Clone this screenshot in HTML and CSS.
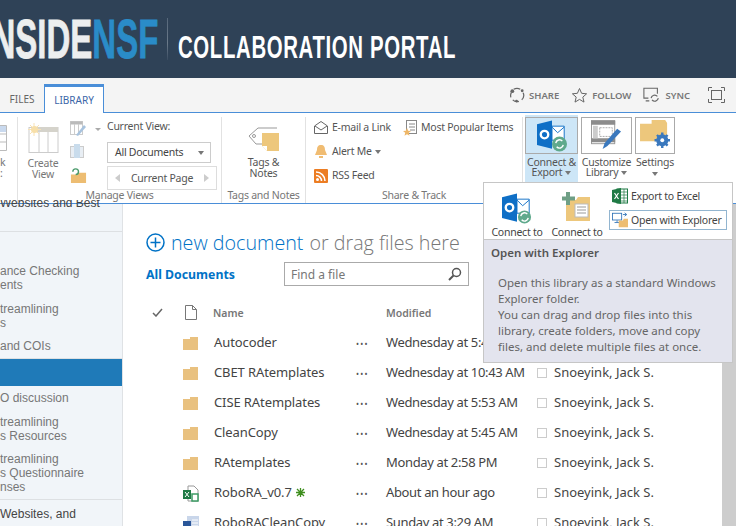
FILE: index.html
```html
<!DOCTYPE html>
<html lang="en">
<head>
    <meta charset="UTF-8">
    <title>Inside NSF Collaboration Portal</title>
    <link rel="stylesheet" href="styles.css">
</head>
<body>
    <header class="banner">
        <div class="logo"><div class="logo-mark"><span class="logo-inside">INSIDE</span><span class="logo-nsf">NSF</span></div></div>
        <div class="banner-rule"></div>
        <div class="portal-title">COLLABORATION PORTAL</div>
    </header>

    <div class="tabbar">
        <div class="tab">FILES</div>
        <div class="tab tab-active">LIBRARY</div>
        <div class="actions">
            <span class="action">
                <svg width="16" height="16" viewBox="0 0 17 17"><path d="M5 2.5a6.5 6.5 0 0 1 7 0M15 6a6.5 6.5 0 0 1-1.500 7.5M10.5 15.2a6.5 6.5 0 0 1-6.500-1.500M2 11A6.5 6.5 0 0 1 2.5 6" fill="none" stroke="#666" stroke-width="1.3"/><circle cx="3.5" cy="4.5" r="2" fill="#666"/><circle cx="14" cy="4" r="1.5" fill="#666"/><circle cx="8" cy="15" r="1.5" fill="#666"/></svg>
                SHARE
            </span>
            <span class="action">
                <svg width="17" height="17" viewBox="0 0 17 17"><path d="M8.5 1.5l2.1 4.800 5 .5-3.800 3.300 1.200 5-4.500-2.700-4.500 2.700 1.200-5L1.400 6.800l5-.5z" fill="none" stroke="#666"/></svg>
                FOLLOW
            </span>
            <span class="action">
                <svg width="18" height="16" viewBox="0 0 20 17"><path d="M6 12H1V1h15v6M3 15h4" fill="none" stroke="#666" stroke-width="1.2"/><path d="M9 12a4 4 0 0 1 7-2M17 12a4 4 0 0 1-7 2" fill="none" stroke="#666" stroke-width="1.3"/></svg>
                SYNC
            </span>
            <svg class="focus" width="17" height="16" viewBox="0 0 17 16"><path d="M.5 4V.5H4M13 .5h3.5V4M16.5 12v3.5H13M4 15.5H.5V12" fill="none" stroke="#666"/><rect x="3.5" y="3.5" width="10" height="9" fill="none" stroke="#666"/></svg>
        </div>
    </div>

    <div class="ribbon">
        <section class="group group-cut">
            <div class="group-body">
                <div class="cut-tool">
                    <svg width="8" height="26" viewBox="0 0 8 26"><path d="M0 .5h7.5v25H0M0 9h7.5M0 17h7.5" fill="none" stroke="#bbb"/><rect y="1" width="7" height="6" fill="#c9d9ee"/></svg>
                    <span>k<br>:</span>
                </div>
            </div>
        </section>

        <section class="group group-views">
            <div class="group-body views-body">
                <div class="create-view">
                    <svg width="31" height="30" viewBox="0 0 31 30"><rect x="1" y="4.5" width="29" height="25" fill="#fff" stroke="#ccc"/><rect x="9" y="4" width="21" height="5" fill="#d5d3cb"/><path d="M11 9v20M20 9v20" stroke="#ccc"/><path d="M6 0v13M0 6.500h13M2 2l9 9M11 2l-9 9" stroke="#f8e2b4"/><circle cx="6.5" cy="6.5" r="3.5" fill="#f7dfa9"/></svg>
                    <span>Create<br>View</span>
                </div>
                <div class="mini-tools">
                    <svg width="16" height="15" viewBox="0 0 16 15"><rect x=".5" y=".5" width="12" height="13" fill="#fff" stroke="#ccc"/><path d="M.5 2h12" stroke="#bbb" stroke-width="3"/><path d="M4.5 3v10M8.5 3v10" stroke="#ccc"/><path d="M6 14l8-10 2 2-8 9z" fill="#a8c3de"/></svg>
                    <svg width="15" height="15" viewBox="0 0 15 15"><rect x=".5" y="2.5" width="13" height="11" fill="#e8eef4" stroke="#ccc"/><rect x="4" y="0" width="6" height="14" fill="#c9dcec"/></svg>
                    <svg width="17" height="17" viewBox="0 0 18 18"><path d="M1 8h6l1-2h9v11H1z" fill="#edbd72"/><path d="M3 5a3 3 0 1 1 3 3" fill="none" stroke="#4a9a6b" stroke-width="1.5"/></svg>
                </div>
                <span class="mini-arrow"></span>
                <div class="view-picker">
                    <div class="view-label">Current View:</div>
                    <div class="view-select">All Documents<span class="arrow"></span></div>
                    <div class="view-pager"><span class="pager-left"></span>Current Page<span class="pager-right"></span></div>
                </div>
            </div>
            <div class="group-name">Manage Views</div>
        </section>

        <section class="group group-tags">
            <div class="group-body tags-body">
                <svg width="32" height="24" viewBox="0 0 32 24"><path d="M29 1H10L1 9l7 8h7" fill="none" stroke="#999"/><circle cx="6" cy="9" r="1.5" fill="none" stroke="#999"/><path d="M14 6h17v18H19l-5-5z" fill="#edc77c"/><path d="M14 19h5v5z" fill="#fff"/></svg>
                <span>Tags &amp;<br>Notes</span>
            </div>
            <div class="group-name">Tags and Notes</div>
        </section>

        <section class="group group-share">
            <div class="group-body share-body">
                <div class="share-col">
                    <div class="share-item">
                        <svg width="14" height="13" viewBox="0 0 14 13"><path d="M.5 5L7 .5 13.5 5v7.500H.5z" fill="#fff" stroke="#666"/><path d="M1 5l6 4 6-4" fill="none" stroke="#666"/></svg>
                        E-mail a Link
                    </div>
                    <div class="share-item">
                        <svg width="14" height="15" viewBox="0 0 14 15"><path d="M7 1c3 0 4 2 4 5l2 5H1l2-5c0-3 1-5 4-5z" fill="#f0bc72"/><rect x="5" y="12" width="4" height="2" fill="#f0bc72"/></svg>
                        <span>Alert Me<i class="arrow arrow-small"></i></span>
                    </div>
                    <div class="share-item">
                        <svg width="14" height="14" viewBox="0 0 14 14"><rect width="14" height="14" rx="1" fill="#ec7d23"/><circle cx="3.5" cy="10.5" r="1.5" fill="#fff"/><path d="M2 6.500a5.500 5.500 0 0 1 5.500 5.500M2 3a9 9 0 0 1 9 9" fill="none" stroke="#fff" stroke-width="1.5"/></svg>
                        RSS Feed
                    </div>
                </div>
                <div class="share-item">
                    <svg width="14" height="16" viewBox="0 0 14 16"><rect x="3.5" y=".5" width="10" height="13" fill="#fff" stroke="#888"/><path d="M6 4h6M6 7h6M7 10h5" stroke="#888"/><path d="M4 8l1.200 2.800L8 11l-2.200 1.800.7 3L4 14.200 1.500 15.800l.7-3L0 11l2.800-.2z" fill="#eeb768"/></svg>
                    Most Popular Items
                </div>
            </div>
            <div class="group-name">Share &amp; Track</div>
        </section>

        <section class="group group-connect">
            <div class="connect-tools">
                <div class="big-button is-open">
                    <div class="button-icon">
                        <svg width="30" height="32" viewBox="0 0 32 33"><path d="M0 4L16 0v30L0 26z" fill="#0f6fc6"/><path d="M16 6h13v15H16z" fill="#fff" stroke="#0f6fc6"/><path d="M16 7l6 6 7-6" fill="none" stroke="#0f6fc6"/><circle cx="8" cy="15" r="4" fill="none" stroke="#fff" stroke-width="2.5"/><circle cx="24" cy="25" r="8" fill="#5fa98c"/><path d="M20 24a4 4 0 0 1 7-2M28 26a4 4 0 0 1-7 2" fill="none" stroke="#fff" stroke-width="1.5"/></svg>
                    </div>
                    <span>Connect &amp;<br>Export<i class="arrow arrow-small"></i></span>
                </div>
                <div class="big-button">
                    <div class="button-icon">
                        <svg width="31" height="29" viewBox="0 0 32 30"><rect x=".5" y=".5" width="24" height="24" fill="#fff" stroke="#999"/><path d="M0 3h25M0 21h25" stroke="#8c8c8c" stroke-width="4"/><rect x="2" y="6" width="5" height="13" fill="#ccc"/><rect x="9" y="8" width="13" height="9" fill="none" stroke="#aaa" stroke-dasharray="2 1"/><path d="M12 30l2-6L27 9l4 3-14 15z" fill="#3a78bd"/></svg>
                    </div>
                    <span>Customize<br>Library<i class="arrow arrow-small"></i></span>
                </div>
                <div class="big-button">
                    <div class="button-icon">
                        <svg width="31" height="29" viewBox="0 0 32 30"><path d="M0 4h12V0h14l2 3v19H0z" fill="#edc77c"/><circle cx="23" cy="21" r="4.500" fill="none" stroke="#3a78bd" stroke-width="3.5"/><path d="M23 13v16M15 21h16M17.500 15.500l11 11M28.500 15.500l-11 11" stroke="#3a78bd" stroke-width="2.5"/><circle cx="23" cy="21" r="2" fill="#fff"/></svg>
                    </div>
                    <span>Settings<br><i class="arrow"></i></span>
                </div>
            </div>
        </section>
    </div>

    <div class="page">
        <nav class="sidebar">
            <div class="nav-block nav-first"><p class="dark">Websites and Best</p></div>
            <div class="nav-block nav-second">
                <p>ance Checking<br>ents</p>
                <p>treamlining<br>s</p>
                <p>and COIs</p>
            </div>
            <div class="nav-selected"></div>
            <div class="nav-block nav-third">
                <p>O discussion</p>
                <p>treamlining<br>s Resources</p>
                <p>treamlining<br>s Questionnaire<br>nses</p>
            </div>
            <div class="nav-block nav-last"><p class="dark">Websites, and</p></div>
        </nav>

        <main class="library">
            <div class="new-doc">
                <svg width="19" height="19" viewBox="0 0 19 19"><circle cx="9.5" cy="9.5" r="8.5" fill="none" stroke="#0072c6" stroke-width="1.5"/><path d="M9.5 4.500v10M4.500 9.5h10" stroke="#0072c6" stroke-width="1.5"/></svg>
                <span class="new-link">new document</span> <span class="new-rest">or drag files here</span>
            </div>
            <div class="view-row">
                <span class="view-current">All Documents</span>
                <div class="search">Find a file
                    <svg width="14" height="14" viewBox="0 0 14 14"><circle cx="8.5" cy="5.5" r="4" fill="none" stroke="#555" stroke-width="1.5"/><path d="M5.500 8.500L1 13" stroke="#555" stroke-width="2"/></svg>
                </div>
            </div>

            <div class="doc-row doc-head">
                <svg class="doc-check" width="11" height="9" viewBox="0 0 11 9"><path d="M1 5l3 3 6-7" fill="none" stroke="#666" stroke-width="1.5"/></svg>
                <svg class="doc-blank" width="12" height="15" viewBox="0 0 12 15"><path d="M.5.500h7l4 4v10H.5zM7.5.500v4h4" fill="none" stroke="#777"/></svg>
                <span>Name</span>
                <span></span>
                <span>Modified</span>
            </div>

            <div class="doc-row">
                <span></span><span class="folder"></span>
                <span class="doc-name">Autocoder</span><span class="dots">&#8226;&#8226;&#8226;</span><span class="doc-date">Wednesday at 5:42 AM</span>
                <span class="box"></span><span>Snoeyink, Jack S.</span>
            </div>
            <div class="doc-row">
                <span></span><span class="folder"></span>
                <span class="doc-name">CBET RAtemplates</span><span class="dots">&#8226;&#8226;&#8226;</span><span class="doc-date">Wednesday at 10:43 AM</span>
                <span class="box"></span><span>Snoeyink, Jack S.</span>
            </div>
            <div class="doc-row">
                <span></span><span class="folder"></span>
                <span class="doc-name">CISE RAtemplates</span><span class="dots">&#8226;&#8226;&#8226;</span><span class="doc-date">Wednesday at 5:53 AM</span>
                <span class="box"></span><span>Snoeyink, Jack S.</span>
            </div>
            <div class="doc-row">
                <span></span><span class="folder"></span>
                <span class="doc-name">CleanCopy</span><span class="dots">&#8226;&#8226;&#8226;</span><span class="doc-date">Wednesday at 5:45 AM</span>
                <span class="box"></span><span>Snoeyink, Jack S.</span>
            </div>
            <div class="doc-row">
                <span></span><span class="folder"></span>
                <span class="doc-name">RAtemplates</span><span class="dots">&#8226;&#8226;&#8226;</span><span class="doc-date">Monday at 2:58 PM</span>
                <span class="box"></span><span>Snoeyink, Jack S.</span>
            </div>
            <div class="doc-row">
                <span></span>
                <svg class="doc-icon" width="16" height="17" viewBox="0 0 16 17"><path d="M5 1h6l4 4v11H5z" fill="#fff" stroke="#999"/><rect y="5" width="8" height="9" fill="#1f7a45"/><path d="M2 7l4 5M6 7l-4 5" stroke="#fff"/><rect x="9" y="9" width="6" height="7" fill="#fff" stroke="#3b9a63" stroke-width="1.5"/></svg>
                <span class="doc-name">RoboRA_v0.7 <svg class="new-flag" width="9" height="9" viewBox="0 0 9 9"><path d="M4.500 0v9M0 4.500h9M1 1l7 7M8 1L1 8" stroke="#3f8f1f" stroke-width="1.3"/></svg></span><span class="dots">&#8226;&#8226;&#8226;</span><span class="doc-date">About an hour ago</span>
                <span class="box"></span><span>Snoeyink, Jack S.</span>
            </div>
            <div class="doc-row">
                <span></span>
                <svg class="doc-icon" width="16" height="17" viewBox="0 0 16 17"><rect x="4" y="1" width="12" height="15" fill="#c9d6ea"/><path d="M9 5h6M9 8h6M9 11h6" stroke="#fff"/><rect y="6" width="8" height="8" fill="#2a5699"/></svg>
                <span class="doc-name">RoboRACleanCopy</span><span class="dots">&#8226;&#8226;&#8226;</span><span class="doc-date">Sunday at 3:29 AM</span>
                <span class="box"></span><span>Snoeyink, Jack S.</span>
            </div>
        </main>
        <div class="scrollbar"></div>
    </div>

    <div class="flyout">
        <div class="flyout-tools">
            <div class="flyout-big">
                <svg width="30" height="32" viewBox="0 0 32 33"><path d="M0 4L16 0v30L0 26z" fill="#0f6fc6"/><path d="M16 6h13v15H16z" fill="#fff" stroke="#0f6fc6"/><path d="M16 7l6 6 7-6" fill="none" stroke="#0f6fc6"/><circle cx="8" cy="15" r="4" fill="none" stroke="#fff" stroke-width="2.5"/><circle cx="24" cy="25" r="7" fill="#5fa98c"/><path d="M20 24a4 4 0 0 1 7-2M28 26a4 4 0 0 1-7 2" fill="none" stroke="#fff" stroke-width="1.5"/></svg>
                <span>Connect to<br>Outlook</span>
            </div>
            <div class="flyout-big flyout-office">
                <svg width="30" height="29" viewBox="0 0 30 29"><path d="M4 8h10l2-3h12v24H4z" fill="#edc77c"/><rect x="13" y="12" width="13" height="13" fill="#fff" stroke="#bbb"/><path d="M15 15h9M15 18h9M15 21h9" stroke="#999"/><path d="M6 0v13M0 6.500h13" stroke="#6f9f86" stroke-width="4"/></svg>
                <span>Connect to<br>Office</span>
            </div>
            <div class="flyout-small">
                <div class="flyout-item">
                    <svg width="16" height="16" viewBox="0 0 16 16"><rect x="5" y="1" width="10.5" height="14" fill="#fff" stroke="#1f7a45"/><path d="M9 4h6M9 7h6M9 10h6M9 13h6M12 1v14" stroke="#1f7a45" stroke-width=".7"/><path d="M0 2l9-2v16l-9-2z" fill="#1f7a45"/><path d="M2.500 5l4 6M6.500 5l-4 6" stroke="#fff" stroke-width="1.2"/></svg>
                    Export to Excel
                </div>
                <div class="flyout-item is-hover">
                    <svg width="16" height="16" viewBox="0 0 19 17"><rect x=".5" y=".5" width="11" height="8" fill="#fff" stroke="#2a6fb5"/><path d="M6 9v2M3 11.500h6" stroke="#2a6fb5"/><path d="M13 2h4M15 0l2.500 2L15 4" fill="none" stroke="#2a6fb5"/><path d="M8 9h5l1-2h5v10H8z" fill="#edbd72"/></svg>
                    Open with Explorer
                </div>
            </div>
        </div>
        <div class="tip">
            <h4>Open with Explorer</h4>
            <p>Open this library as a standard Windows Explorer folder.<br>You can drag and drop files into this library, create folders, move and copy files, and delete multiple files at once.</p>
        </div>
    </div>
</body>
</html>
```

FILE: styles.css
```css
html, body {
    margin: 0;
    padding: 0;
}
body {
    position: relative;
    width: 736px;
    height: 526px;
    overflow: hidden;
    background-color: #fff;
    font-family: "Noto Sans", "Open Sans", sans-serif;
    font-size: 12px;
    color: #444;
}

/* banner */
.banner {
    display: flex;
    align-items: center;
    height: 78px;
    background-color: #2f4257;
    overflow: hidden;
}
.logo {
    flex: none;
    display: flex;
    justify-content: flex-end;
    width: 158px;
    height: 48px;
    margin-right: 9px;
    overflow: hidden;
}
.logo-mark {
    flex: none;
    transform: scaleX(0.6); /* no condensed face installed */
    transform-origin: right center;
    font-family: "Liberation Sans", Arial, sans-serif;
    font-weight: bold;
    font-size: 55px;
    line-height: 48px;
    -webkit-text-stroke: 0.8px;
    white-space: nowrap;
}
.logo-inside {
    color: #eceeef;
}
.logo-nsf {
    color: #2a8cc8;
}
.banner-rule {
    flex: none;
    width: 1px;
    height: 42px;
    background: linear-gradient(#56677a, #6b7a8a 60%, #3a4c61);
}
.portal-title {
    flex: none;
    align-self: flex-start;
    margin: 29px 0 0 10px;
    transform: scaleX(0.637);
    transform-origin: left center;
    font-family: "Liberation Sans", Arial, sans-serif;
    font-weight: bold;
    font-size: 32px;
    line-height: 36px;
    letter-spacing: 1px;
    color: #fff;
    white-space: nowrap;
}

/* tabs */
.tabbar {
    display: flex;
    align-items: flex-end;
    height: 34px;
    background-color: #f4f4f4;
    border-bottom: 1px solid #4a8ed8;
}
.tab {
    width: 44px;
    height: 26px;
    line-height: 26px;
    text-align: center;
    font-size: 10px;
    color: #666;
}
.tab-active {
    width: 58px;
    margin-bottom: -1px;
    background-color: #fff;
    border: 1px solid #4a8ed8;
    border-top-width: 3px;
    border-bottom: none;
    color: #3b66a8;
    line-height: 27px;
}
.actions {
    display: flex;
    align-items: center;
    gap: 12px;
    margin-left: auto;
    margin-right: 11px;
    height: 34px;
}
.action {
    display: flex;
    align-items: center;
    gap: 4px;
    font-size: 9.5px;
    font-weight: 600;
    color: #777;
}
.focus {
    margin-left: 6px;
}

/* ribbon */
.ribbon {
    display: flex;
    height: 90px;
    border-bottom: 1px solid #4a8ed8;
    background-color: #fff;
    font-size: 10.5px;
    letter-spacing: -0.25px;
    line-height: 11px;
}
.group {
    display: flex;
    flex-direction: column;
    flex: none;
    height: 86px;
    margin-top: 4px;
    border-right: 1px solid #e2e2e2;
}
.group-body {
    flex: none;
    display: flex;
    box-sizing: border-box;
    height: 69px;
}
.group-name {
    height: 17px;
    line-height: 18px;
    text-align: center;
    color: #777;
}
.group-cut {
    width: 17px;
}
.cut-tool {
    padding-top: 8px;
    color: #777;
}
.cut-tool svg {
    display: block;
    margin-left: -1px;
    margin-bottom: 6px;
}
.group-views {
    width: 203px;
}
.views-body {
    padding-top: 4px;
}
.create-view {
    flex: none;
    width: 50px;
    text-align: center;
    color: #777;
}
.create-view svg {
    display: block;
    margin: 2px auto 5px;
}
.mini-tools {
    flex: none;
    display: flex;
    flex-direction: column;
    gap: 8px;
    width: 18px;
    margin-left: 2px;
}
.mini-arrow {
    flex: none;
    width: 0;
    height: 0;
    margin: 7px 0 0 7px;
    border: 3px solid transparent;
    border-top-color: #aaa;
}
.view-picker {
    margin-left: 6px;
    color: #555;
}
.view-label {
    height: 18px;
    white-space: nowrap;
}
.view-select {
    position: relative;
    box-sizing: border-box;
    width: 104px;
    height: 21px;
    margin-top: 3px;
    padding-left: 7px;
    border: 1px solid #ccc;
    line-height: 19px;
    color: #444;
    white-space: nowrap;
}
.view-select .arrow {
    position: absolute;
    right: 6px;
    top: 8px;
}
.view-pager {
    display: flex;
    align-items: center;
    justify-content: space-between;
    box-sizing: border-box;
    width: 110px;
    height: 24px;
    margin-top: 3px;
    padding: 0 7px;
    border: 1px solid #ddd;
    white-space: nowrap;
}
.pager-left {
    border: 4px solid transparent;
    border-left-width: 0;
    border-right: 5px solid #ccc;
}
.pager-right {
    border: 4px solid transparent;
    border-right-width: 0;
    border-left: 5px solid #ccc;
}
.arrow {
    display: inline-block;
    width: 0;
    height: 0;
    border: 3px solid transparent;
    border-top: 4px solid #777;
    border-bottom-width: 0;
}
.arrow-small {
    margin-left: 3px;
    vertical-align: 1px;
}
.group-tags {
    width: 83px;
}
.tags-body {
    flex-direction: column;
    align-items: center;
    padding-top: 10px;
    color: #555;
    text-align: center;
}
.tags-body svg {
    margin-bottom: 6px;
}
.group-share {
    width: 216px;
}
.share-body {
    padding: 2px 0 0 8px;
}
.share-col {
    flex: none;
    display: flex;
    flex-direction: column;
    gap: 7px;
    width: 89px;
}
.share-item {
    display: flex;
    align-items: center;
    gap: 4px;
    height: 17px;
    color: #555;
    white-space: nowrap;
}
.group-connect {
    height: 88px;
    margin-top: 2px;
    border-right: none;
}
.connect-tools {
    display: flex;
    gap: 3px;
    padding-left: 2px;
}
.big-button {
    width: 53px;
    height: 70px;
    text-align: center;
    color: #555;
    white-space: nowrap;
    line-height: 10px;
}
.big-button:nth-child(2) {
    width: 51px;
}
.big-button:nth-child(3) {
    width: 40px;
}
.button-icon {
    display: flex;
    justify-content: center;
    align-items: flex-start;
    box-sizing: border-box;
    height: 37px;
    margin: 2px 0 3px;
    padding-top: 2px;
    border: 1px solid #aaa;
    background-color: #fff;
}
.is-open {
    background-color: #cde6f7;
}
.is-open .button-icon {
    background-color: #cde6f7;
}

/* left nav */
.page {
    display: flex;
    height: 322px;
}
.sidebar {
    flex: none;
    box-sizing: border-box;
    width: 123px;
    background-color: #f1f5f9;
    border-right: 1px solid #dfe2e5;
    font-family: "Liberation Sans", Arial, sans-serif;
    font-size: 12px;
    line-height: 14px;
    color: #777;
}
.sidebar p {
    margin: 0 0 9.5px;
}
.sidebar .dark {
    color: #444;
}
.nav-block {
    box-sizing: border-box;
    border-bottom: 1px solid #dde0e3;
    white-space: nowrap;
}
.nav-first {
    display: flow-root;
    height: 28px;
}
/* this line runs up under the ribbon edge, only its lower half shows */
.sidebar .nav-first p {
    height: 10px;
    margin: -4px 0 0;
    overflow: hidden;
    line-height: 6px;
}
.nav-second {
    height: 126px;
    padding-top: 32px;
    border-bottom: none;
}
.nav-selected {
    box-sizing: border-box;
    height: 28px;
    background-color: #1f7ab8;
    border-top: 1px solid #dde0e3;
}
.nav-third {
    height: 114px;
    padding-top: 5px;
}
.nav-last {
    padding-top: 7px;
    border-bottom: none;
}

/* library */
.library {
    flex: none;
    box-sizing: border-box;
    width: 599px;
    padding-left: 23px;
    color: #444;
}
.new-doc {
    display: flex;
    align-items: center;
    gap: 6px;
    height: 30px;
    margin-top: 23px;
    font-family: "Open Sans", sans-serif;
    font-weight: 300;
    font-size: 19.7px;
    white-space: nowrap;
}
.new-link {
    color: #0072c6;
}
.new-rest {
    color: #777;
}
.view-row {
    display: flex;
    align-items: center;
    height: 26px;
    margin-top: 4px;
}
.view-current {
    width: 138px;
    font-weight: 700;
    font-size: 12.3px;
    color: #0072c6;
}
.search {
    display: flex;
    align-items: center;
    justify-content: space-between;
    box-sizing: border-box;
    width: 185px;
    height: 24px;
    padding: 0 6px;
    border: 1px solid #aaa;
    color: #777;
}
.doc-row {
    display: grid;
    grid-template-columns: 37px 30px 143px 30px 151px 17px auto;
    align-items: center;
    height: 30px;
    font-size: 13px;
    color: #444;
    white-space: nowrap;
}
.doc-head {
    height: 29px;
    margin-top: 11px;
    font-size: 10.5px;
    font-weight: 600;
    color: #777;
}
.doc-check {
    margin-left: 6px;
}
.doc-blank {
    margin-left: 2px;
}
.doc-icon {
    margin-top: 3px;
}
.doc-name {
    margin-left: 1px;
    letter-spacing: -0.1px;
}
.doc-date {
    letter-spacing: -0.35px;
}
.folder {
    display: block;
    position: relative;
    width: 15px;
    height: 11px;
    margin-top: 5px;
    background-color: #e9c17f;
}
.folder::before {
    content: "";
    position: absolute;
    right: 0;
    top: -2px;
    width: 8px;
    height: 2px;
    background-color: #e9c17f;
}
.dots {
    font-size: 8px;
    letter-spacing: 1.3px;
    color: #555;
    margin-top: 3px;
}
.box {
    display: block;
    box-sizing: border-box;
    width: 10px;
    height: 10px;
    margin-top: 1px;
    border: 1px solid #ccc;
}
.new-flag {
    margin-left: 1px;
}
.scrollbar {
    flex: 1;
    background-color: #cdcdcd;
}

/* connect flyout, sits over the ribbon and the list */
.flyout {
    position: absolute;
    left: 483px;
    top: 182px;
    box-sizing: border-box;
    width: 250px;
    height: 181px;
    background-color: #fff;
    border: 1px solid #c6c6c6;
}
.flyout-tools {
    display: flex;
    box-sizing: border-box;
    height: 57px;
    padding-left: 3px;
    overflow: hidden;
    border-bottom: 1px solid #c6c6c6;
    font-size: 10.5px;
    letter-spacing: -0.25px;
    line-height: 11px;
    color: #444;
}
.flyout-big {
    flex: none;
    width: 60px;
    padding-top: 10px;
    text-align: center;
    white-space: nowrap;
}
.flyout-big svg {
    display: block;
    margin: 0 auto 2px;
}
.flyout-office {
    padding-top: 9px;
}
.flyout-office svg {
    margin-bottom: 6px;
}
.flyout-small {
    padding: 3px 0 0 2px;
}
.flyout-item {
    display: flex;
    align-items: center;
    gap: 3px;
    box-sizing: border-box;
    width: 118px;
    height: 20px;
    margin-bottom: 4px;
    padding-left: 3px;
    white-space: nowrap;
}
.is-hover {
    border: 1px solid #92b5d0;
    padding-left: 2px;
}
.tip {
    box-sizing: border-box;
    height: 122px;
    padding: 5px 7px;
    background-color: #e3e4ee;
    color: #666;
    font-size: 11.5px;
    line-height: 16px;
}
.tip h4 {
    margin: 0 0 14px;
    font-size: 11.5px;
    font-weight: 600;
    color: #555;
}
.tip p {
    margin: 0 0 0 7px;
}
```
